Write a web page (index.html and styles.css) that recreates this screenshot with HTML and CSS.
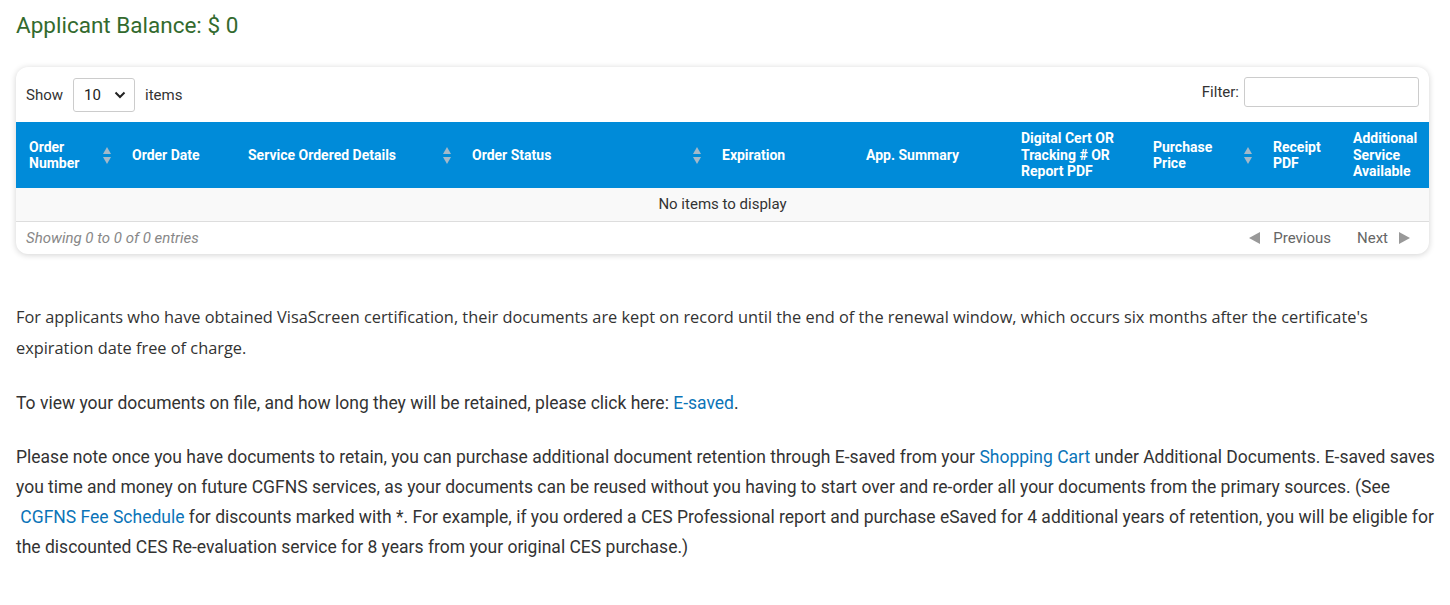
FILE: index.html
```html
<!DOCTYPE html>
<html>
<head>
<meta charset="utf-8">
<link rel="stylesheet" href="styles.css">
</head>
<body>
<div class="page">
  <h2 class="balance">Applicant Balance: $ 0</h2>
  <div class="card">
    <div class="toolbar">
      <div class="show">
        <span>Show</span>
        <div class="select"><span>10</span>
          <svg width="12" height="8" viewBox="0 0 12 8"><path d="M1.5 1.5 L6 6 L10.5 1.5" fill="none" stroke="#222" stroke-width="2"/></svg>
        </div>
        <span>items</span>
      </div>
      <div class="filter">
        <span>Filter:</span>
        <div class="input"></div>
      </div>
    </div>
    <table class="grid">
      <colgroup>
        <col class="c1"><col class="c2"><col class="c3"><col class="c4"><col class="c5"><col class="c6"><col class="c7"><col class="c8"><col class="c9"><col class="c10">
      </colgroup>
      <thead>
        <tr>
          <th class="sortable"><div class="hc"><span>Order<br>Number</span><i class="sort"></i></div></th>
          <th>Order Date</th>
          <th class="sortable"><div class="hc"><span>Service Ordered Details</span><i class="sort"></i></div></th>
          <th class="sortable"><div class="hc"><span>Order Status</span><i class="sort"></i></div></th>
          <th>Expiration</th>
          <th>App. Summary</th>
          <th>Digital Cert OR Tracking # OR Report PDF</th>
          <th class="sortable"><div class="hc"><span>Purchase<br>Price</span><i class="sort"></i></div></th>
          <th>Receipt<br>PDF</th>
          <th>Additional Service Available</th>
        </tr>
      </thead>
      <tbody>
        <tr><td colspan="10" class="empty">No items to display</td></tr>
      </tbody>
    </table>
    <div class="footer">
      <span class="info">Showing 0 to 0 of 0 entries</span>
      <div class="pager">
        <span class="pg"><i class="tri left"></i>Previous</span>
        <span class="pg next">Next<i class="tri right"></i></span>
      </div>
    </div>
  </div>

  <div class="notes">
    <p class="p1">For applicants who have obtained VisaScreen certification, their documents are kept on record until the end of the renewal window, which occurs six months after the certificate's expiration date free of charge.</p>
    <p>To view your documents on file, and how long they will be retained, please click here: <a href="#">E-saved</a>.</p>
    <p>Please note once you have documents to retain, you can purchase additional document retention through E-saved from your <a href="#">Shopping Cart</a> under Additional Documents. E-saved saves you time and money on future CGFNS services, as your documents can be reused without you having to start over and re-order all your documents from the primary sources. (See &nbsp;<a href="#">CGFNS Fee Schedule</a> for discounts marked with *. For example, if you ordered a CES Professional report and purchase eSaved for 4 additional years of retention, you will be eligible for the discounted CES Re-evaluation service for 8 years from your original CES purchase.)</p>
  </div>
</div>
</body>
</html>
```
FILE: styles.css
```css
* { box-sizing: border-box; }
html, body { margin: 0; padding: 0; background: #fff; }
body { font-family: Roboto, "Liberation Sans", Arial, sans-serif; color: #333; }
.page { padding: 0 16px; }
.balance {
  margin: 0;
  padding-top: 11px;
  font-size: 22.5px;
  font-weight: 400;
  color: #336a2e;
  line-height: 28px;
  height: 67px;
}
.card {
  width: 1413px;
  border-radius: 12px;
  background: #fff;
  box-shadow: 0 1px 6px rgba(0,0,0,0.18);
  overflow: hidden;
}
.toolbar {
  height: 55px;
  display: flex;
  align-items: center;
  justify-content: space-between;
  padding: 0 10px;
  font-size: 15px;
  color: #333;
}
.show { display: flex; align-items: center; gap: 10px; }
.select {
  width: 62px;
  height: 34px;
  border: 1px solid #ccc;
  border-radius: 3px;
  display: flex;
  align-items: center;
  justify-content: space-between;
  padding: 0 8px 0 10px;
  font-size: 15px;
  color: #222;
  margin-top: 1px;
}
.filter { display: flex; align-items: center; gap: 5px; margin-top: -6px; }
.input {
  width: 175px;
  height: 30px;
  border: 1px solid #ccc;
  border-radius: 3px;
}
.grid {
  width: 1413px;
  border-collapse: collapse;
  table-layout: fixed;
}
.c1 { width: 103px; }
.c2 { width: 116px; }
.c3 { width: 224px; }
.c4 { width: 250px; }
.c5 { width: 144px; }
.c6 { width: 155px; }
.c7 { width: 132px; }
.c8 { width: 120px; }
.c9 { width: 80px; }
.c10 { width: 89px; }
.grid th {
  background: #008bd9;
  color: #fff;
  font-size: 14px;
  font-weight: 700;
  text-align: left;
  line-height: 16.5px;
  padding: 0 8px 0 13px;
  height: 66px;
  vertical-align: middle;
}
.hc { display: flex; align-items: center; justify-content: space-between; }
.sort {
  display: inline-block;
  width: 8px;
  height: 17px;
  position: relative;
  flex: none;
}
.sort::before, .sort::after {
  content: "";
  position: absolute;
  left: 0;
  border-left: 4px solid transparent;
  border-right: 4px solid transparent;
}
.sort::before { top: 0; border-bottom: 7px solid #a4b9c9; }
.sort::after { bottom: 0; border-top: 7px solid #a4b9c9; }
.empty {
  background: #f9f9f9;
  height: 33px;
  text-align: center;
  font-size: 15px;
  color: #333;
  border-bottom: 1px solid #ddd;
  padding: 0;
}
.footer {
  height: 32px;
  display: flex;
  align-items: center;
  justify-content: space-between;
  padding: 0 10px;
  font-size: 15px;
}
.info { font-style: italic; color: #888; }
.pager { display: flex; gap: 26px; color: #666; margin-right: 9px; }
.pg { display: flex; align-items: center; gap: 13px; }
.pg.next { gap: 11px; }
.tri { display: inline-block; width: 0; height: 0; border-top: 6.5px solid transparent; border-bottom: 6.5px solid transparent; }
.tri.left { border-right: 11px solid #999; }
.tri.right { border-left: 11px solid #999; }
.notes { padding-top: 48px; margin-right: -8px; }
.notes p {
  margin: 0 0 24px 0;
  font-size: 17.5px;
  line-height: 30px;
  color: #333;
}
.notes p.p1 {
  font-family: "Open Sans", "Noto Sans", sans-serif;
  font-size: 16.35px;
  line-height: 31px;
}
.notes a { color: #0b74b8; text-decoration: none; }
```
